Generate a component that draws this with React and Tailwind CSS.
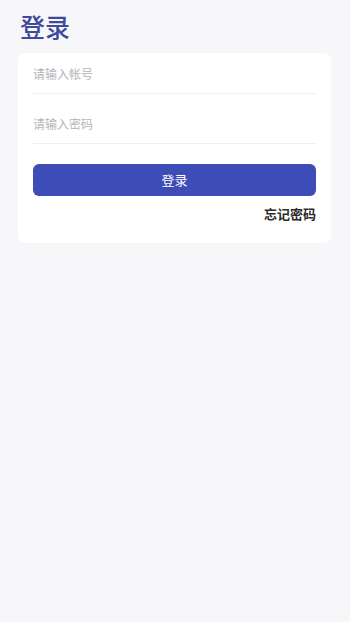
import React, { useState } from "react";

const font = { fontFamily: '"Noto Sans CJK SC", "Noto Sans", sans-serif' };

export default function App() {
  const [account, setAccount] = useState("");
  const [password, setPassword] = useState("");

  return (
    <div className="min-h-[622px] w-full bg-[#f7f7f9] px-[18px] pt-[8px]" style={font}>
      {/* Title */}
      <h1 className="text-[25px] leading-[36px] font-medium text-[#3f4a9c] pl-[2px]">登录</h1>

      {/* Card */}
      <div className="mt-[9px] w-[313px] rounded-[8px] bg-white px-[15px] pb-[19px]">
        <input
          value={account}
          onChange={(e) => setAccount(e.target.value)}
          placeholder="请输入帐号"
          className="block w-full h-[41px] border-b border-[#f0f0f2] bg-transparent text-[12px] text-gray-700 placeholder:text-[#b4b4b8] outline-none"
          style={font}
        />
        <input
          type="password"
          value={password}
          onChange={(e) => setPassword(e.target.value)}
          placeholder="请输入密码"
          className="mt-[9px] block w-full h-[41px] border-b border-[#f0f0f2] bg-transparent text-[12px] text-gray-700 placeholder:text-[#b4b4b8] outline-none"
          style={font}
        />

        <button
          className="mt-[20px] flex h-[32px] w-full items-center justify-center rounded-[6px] bg-[#3e4cb8] text-[13px] text-white"
          style={font}
        >
          登录
        </button>

        <div className="mt-[8px] flex justify-end">
          <span className="text-[13px] leading-[20px] text-[#2a2a2a] font-semibold">忘记密码</span>
        </div>
      </div>
    </div>
  );
}
